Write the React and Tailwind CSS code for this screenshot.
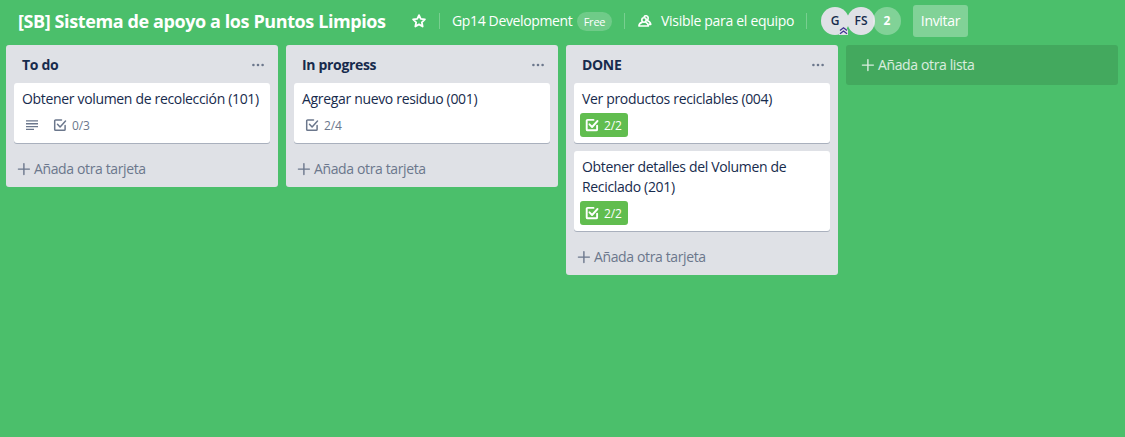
import React from "react";

function StarIcon() {
  return (
    <svg className="size-4 shrink-0" viewBox="0 0 16 16" fill="none" stroke="white" strokeWidth="1.8" strokeLinejoin="round">
      <path d="M8 2.1l1.75 3.85 4.15.5-3.05 2.85.8 4.2L8 11.4l-3.65 2.1.8-4.2L2.1 6.45l4.15-.5z" />
    </svg>
  );
}

function TeamIcon() {
  return (
    <svg className="h-4 w-4 shrink-0" viewBox="0 0 16 16" fill="none" stroke="white" strokeWidth="1.6" strokeLinejoin="round" strokeLinecap="round">
      <circle cx="7" cy="7" r="2.2" />
      <path d="M1.900 13c.2-2 1.500-3.200 3.100-3.600M9 9.400c1.300.5 2.200 1.700 2.400 3.600H1.900" />
      <path d="M7.200 3.600c.7-1.300 3.900-1.200 4 1.300 0 1.100-.4 1.900-1 2.500 2 .6 3.300 2 3.600 4h-1.700" />
    </svg>
  );
}

function CheckIcon({ bold }) {
  return (
    <svg className="size-4 shrink-0" viewBox="0 0 16 16" fill="none" stroke="currentColor" strokeWidth={bold ? 1.9 : 1.5} strokeLinecap="round" strokeLinejoin="round">
      <path d="M9.500 2.900H3.600a.9.9 0 0 0-.9.900v8.600a.9.9 0 0 0 .9.900h8.600a.9.900 0 0 0 .9-.900V8.600" />
      <path d="M5.500 7.300l2.600 2.700 5.400-6" />
    </svg>
  );
}

function LinesIcon() {
  return (
    <svg className="size-4 shrink-0" viewBox="0 0 16 16" fill="currentColor">
      <path d="M2 3.200h12v1.300H2zM2 6.100h12v1.300H2zM2 9h12v1.300H2zM2 11.800h8v1.300H2z" />
    </svg>
  );
}

function PlusIcon() {
  return (
    <svg className="size-4 shrink-0" viewBox="0 0 16 16" fill="none" stroke="currentColor" strokeWidth="1.400" strokeLinecap="round">
      <path d="M7.900 2.600v11M2.400 8.100h11" />
    </svg>
  );
}

function DotsIcon() {
  return (
    <svg className="size-4 shrink-0 text-[#6b778c]" viewBox="0 0 16 16" fill="currentColor">
      <circle cx="3.400" cy="8" r="1.300" />
      <circle cx="8" cy="8" r="1.300" />
      <circle cx="12.600" cy="8" r="1.300" />
    </svg>
  );
}

function Badge({ value, done }) {
  return (
    <div className={done ? "flex h-6 w-12 items-center gap-1 rounded-[3px] bg-[#61bd4f] pl-1 text-white" : "flex h-6 items-center gap-1 pl-1 text-[#6b778c]"}>
      <CheckIcon bold={done} />
      <span className="pt-px text-xs tracking-[-0.1px]">{value}</span>
    </div>
  );
}

function Card({ children, value, done, description }) {
  return (
    <div className="rounded-[3px] bg-white px-2 pt-1.5 pb-1.5 text-sm leading-5 tracking-[-0.33px] text-[#172b4d] shadow-[0_1px_0_rgba(9,30,66,0.25)]">
      {children}
      <div className="-ml-0.5 mt-1 flex h-6 items-center text-[#6b778c]">
        {description && (
          <span className="mr-2 flex w-5 pl-1">
            <LinesIcon />
          </span>
        )}
        <Badge value={value} done={done} />
      </div>
    </div>
  );
}

function List({ title, children }) {
  return (
    <section className="flex w-[272px] shrink-0 flex-col rounded-[3px] bg-[#dfe1e6] px-2 pb-1">
      <div className="flex h-[38px] items-center justify-between pt-0.5 pr-1 pl-2">
        <h2 className="text-sm font-bold tracking-[-0.33px] text-[#172b4d]">{title}</h2>
        <DotsIcon />
      </div>
      <div className="flex flex-col gap-2">{children}</div>
      <div className="mt-3 flex h-7 items-center pl-0.5 text-sm text-[#6b778c]">
        <PlusIcon />
        <span className="pl-0.5 tracking-[-0.37px]">Añada otra tarjeta</span>
      </div>
    </section>
  );
}

function Divider() {
  return <span className="h-4 w-px shrink-0 bg-white/25" />;
}

export default function App() {
  return (
    <div className="h-[437px] w-[1125px] overflow-hidden bg-[#4bbf6b] font-['Open_Sans','Noto_Sans',sans-serif] whitespace-nowrap">
      <header className="flex h-[45px] items-center pb-[3px] pl-[18px] text-sm text-white">
        <h1 className="w-[393px] text-lg font-bold tracking-[-0.4px]">[SB] Sistema de apoyo a los Puntos Limpios</h1>
        <StarIcon />
        <span className="w-3" />
        <Divider />
        <span className="ml-3 w-[125px] tracking-[-0.36px]">Gp14 Development</span>
        <span className="flex h-[19px] w-[35px] items-center justify-center rounded-full bg-white/20 pt-px text-[11px] tracking-[-0.2px]">Free</span>
        <span className="w-3" />
        <Divider />
        <span className="w-3" />
        <TeamIcon />
        <span className="ml-2 w-[145px] tracking-[-0.3px]">Visible para el equipo</span>
        <Divider />
        <div className="ml-3.5 flex text-xs font-semibold">
          <span className="relative z-10 flex size-7 items-center justify-center rounded-full bg-[#dfe1e6] text-[#172b4d]">
            G
            <svg className="absolute right-px bottom-0 h-[9px] w-[9px]" viewBox="0 0 9 9">
              <path d="M0 4L4.500 0L9 4V9H0z" fill="#dfe1e6" />
              <path d="M1 4.500l3.500-2.700L8 4.500M1 7.800l3.500-2.700L8 7.800" fill="none" stroke="#403294" strokeWidth="1.300" />
            </svg>
          </span>
          <span className="-ml-0.5 flex size-7 items-center justify-center rounded-full bg-[#dfe1e6] text-[#172b4d]">FS</span>
          <span className="-ml-0.5 flex size-7 items-center justify-center rounded-full bg-white/30 font-bold text-white">2</span>
        </div>
        <button className="ml-3 h-8 w-[55px] rounded-[3px] bg-white/30 text-sm tracking-[-0.3px]">Invitar</button>
      </header>
      <main className="flex items-start gap-2 pl-1.5">
        <List title="To do">
          <Card value="0/3" description>Obtener volumen de recolección (101)</Card>
        </List>
        <List title="In progress">
          <Card value="2/4">Agregar nuevo residuo (001)</Card>
        </List>
        <List title="DONE">
          <Card value="2/2" done>Ver productos reciclables (004)</Card>
          <Card value="2/2" done>
            Obtener detalles del Volumen de<br />Reciclado (201)
          </Card>
        </List>
        <div className="flex h-10 w-[272px] shrink-0 items-center rounded-[3px] bg-[#43a95e] pl-3.5 text-sm text-white/80">
          <PlusIcon />
          <span className="pl-0.5 tracking-[-0.37px]">Añada otra lista</span>
        </div>
      </main>
    </div>
  );
}
